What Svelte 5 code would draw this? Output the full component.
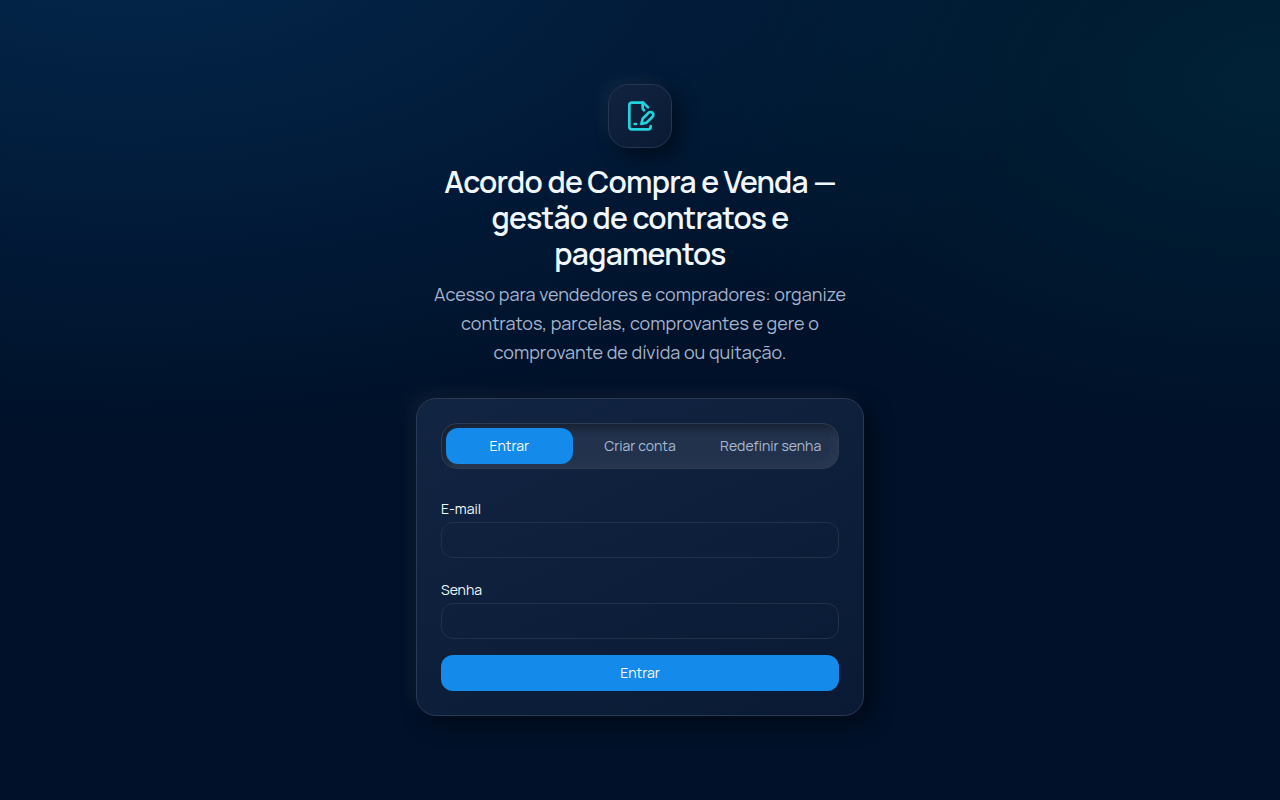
<script>
  const tabs = ['Entrar', 'Criar conta', 'Redefinir senha'];
  let active = $state(0);
  let email = $state('');
  let password = $state('');
</script>

<main>
  <div class="column">
    <header>
      <div class="badge">
        <svg viewBox="0 0 24 24" aria-hidden="true">
          <path d="M20 19.5v.5a2 2 0 0 1-2 2H6a2 2 0 0 1-2-2V4a2 2 0 0 1 2-2h8.5L18 5.5" />
          <path d="M14 2v4a2 2 0 0 0 1 1.7" />
          <path d="M8 18h1" />
          <path d="M18.42 9.61a2.1 2.1 0 1 1 2.97 2.97L16.95 17 13 18l.99-3.95 4.43-4.44Z" />
        </svg>
      </div>
      <h1>Acordo de Compra e Venda — gestão de contratos e pagamentos</h1>
      <p>Acesso para vendedores e compradores: organize contratos, parcelas, comprovantes e gere o comprovante de dívida ou quitação.</p>
    </header>

    <section class="card">
      <div class="tabs" role="tablist">
        {#each tabs as tab, i}
          <button type="button" role="tab" aria-selected={active === i} class:active={active === i} onclick={() => (active = i)}>{tab}</button>
        {/each}
      </div>
      <form onsubmit={(e) => e.preventDefault()}>
        <div class="field">
          <label for="email">E-mail</label>
          <input id="email" type="email" autocomplete="email" bind:value={email} />
        </div>
        <div class="field">
          <label for="password">Senha</label>
          <input id="password" type="password" autocomplete="current-password" bind:value={password} />
        </div>
        <button type="submit" class="submit">Entrar</button>
      </form>
    </section>
  </div>
</main>

<style>
  :global(body) {
    background: #001129;
  }

  main {
    box-sizing: border-box;
    min-height: 100vh;
    display: flex;
    align-items: center;
    justify-content: center;
    padding: 40px 16px;
    color: #f1f7ff;
    font: 14px/20px Manrope, Inter, sans-serif;
    background:
      radial-gradient(1000px 520px at 10% -10%, rgba(20, 138, 234, 0.19), transparent),
      radial-gradient(640px 360px at 100% 10%, rgba(0, 212, 200, 0.085), transparent),
      #001129;
  }

  .column {
    width: 100%;
    max-width: 448px;
  }

  header {
    display: flex;
    flex-direction: column;
    align-items: center;
    text-align: center;
    margin-bottom: 31px;
  }

  .badge {
    box-sizing: border-box;
    width: 64px;
    height: 64px;
    display: grid;
    place-items: center;
    margin-bottom: 16px;
    border: 1px solid #26364f;
    border-radius: 20px;
    background: linear-gradient(145deg, #11233f, #0a1a35);
    box-shadow:
      8px 8px 20px rgba(0, 0, 0, 0.45),
      -6px -6px 16px rgba(255, 255, 255, 0.05);
  }

  svg {
    width: 32px;
    height: 32px;
    fill: none;
    stroke: #22d3dd;
    stroke-width: 2;
    stroke-linecap: round;
    stroke-linejoin: round;
  }

  h1 {
    margin: 0;
    font-size: 30px;
    line-height: 36px;
    font-weight: 600;
    letter-spacing: -0.025em;
  }

  p {
    margin: 8px 0 0;
    font-size: 18px;
    line-height: 29px;
    font-weight: 400;
    color: #a5b4cd;
  }

  .card {
    padding: 24px;
    border: 1px solid #2a3a54;
    border-radius: 20px;
    background: linear-gradient(155deg, #112441, #0a1a35);
    box-shadow:
      8px 8px 22px rgba(0, 0, 0, 0.45),
      -6px -6px 16px rgba(255, 255, 255, 0.05);
  }

  .tabs {
    display: grid;
    grid-template-columns: repeat(3, 1fr);
    gap: 4px;
    padding: 4px;
    margin-bottom: 32px;
    border: 1px solid #2c3b51;
    border-radius: 16px;
    background: #22324c;
    box-shadow:
      inset 4px 4px 10px rgba(0, 0, 0, 0.4),
      inset -4px -4px 10px rgba(255, 255, 255, 0.05);
  }

  button {
    height: 36px;
    padding: 0;
    border: 0;
    border-radius: 12px;
    background: transparent;
    color: #a9b9d2;
    font: inherit;
    white-space: nowrap;
    cursor: pointer;
  }

  .active,
  .submit {
    background: #148aea;
    color: #f8fbff;
  }

  form {
    display: flex;
    flex-direction: column;
  }

  .field {
    display: flex;
    flex-direction: column;
    gap: 5px;
    line-height: 16px;
  }

  .field + .field {
    margin-top: 24px;
  }

  .submit {
    margin-top: 16px;
  }

  input {
    box-sizing: border-box;
    width: 100%;
    height: 36px;
    padding: 4px 12px;
    border: 1px solid #213149;
    border-radius: 12px;
    outline: none;
    background: transparent;
    color: inherit;
    font: inherit;
  }

  input:focus-visible {
    border-color: #148aea;
  }
</style>
